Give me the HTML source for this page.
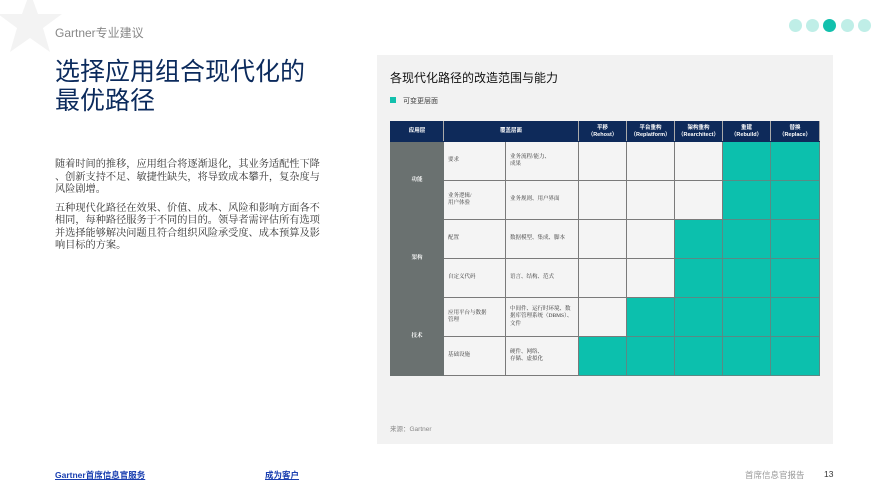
<!DOCTYPE html>
<html><head><meta charset="utf-8"><style>
*{margin:0;padding:0;box-sizing:border-box}
body{width:889px;height:500px;background:#fff;position:relative;overflow:hidden;font-family:"Liberation Sans","Noto Sans CJK SC",sans-serif}
.a{position:absolute}
.dot{position:absolute;top:19px;width:13px;height:13px;border-radius:50%;background:#bfeee7}
table{border-collapse:collapse;position:absolute;left:390px;top:121px;width:429px;table-layout:fixed}
td{border:1px solid #7a7a7a;font-family:"Liberation Serif","Noto Serif CJK SC",serif;font-size:5.5px;color:#333;background:#f4f4f4;padding:0 4px;line-height:1.3}
th{background:#0e2a5a;color:#fff;font-size:5.5px;font-weight:bold;height:20px;border:1px solid #0e2a5a;border-right:1px solid #aaa;line-height:1.25}
td.g{background:#0cc0ad;border-color:#5a8a85}
td.l{background:#6a7170;color:#fff;text-align:center;border-color:#6a7170;font-weight:bold}
tr.r td{height:39px}
</style></head><body>
<svg class="a" style="left:0;top:0" width="70" height="60" viewBox="0 0 70 60"><polygon points="30,-8 38,14 62,14 43,28 50,52 30,38 10,52 17,28 -2,14 22,14" fill="#f3f3f3"/></svg>
<div class="a" style="left:55px;top:24px;font-size:12px;color:#888">Gartner专业建议</div>
<div class="dot" style="left:789px"></div><div class="dot" style="left:806px"></div><div class="dot" style="left:823px;background:#12c0ad"></div><div class="dot" style="left:841px"></div><div class="dot" style="left:858px"></div>
<div class="a" style="left:55px;top:58px;font-size:25px;line-height:29px;color:#0b2a5c">选择应用组合现代化的<br>最优路径</div>
<div class="a" style="left:55px;top:159px;font-family:'Liberation Serif','Noto Serif CJK SC',serif;font-size:10.2px;line-height:12.5px;color:#333;width:300px">随着时间的推移，应用组合将逐渐退化，其业务适配性下降<br>、创新支持不足、敏捷性缺失，将导致成本攀升，复杂度与<br>风险剧增。<div style="height:6px"></div>五种现代化路径在效果、价值、成本、风险和影响方面各不<br>相同，每种路径服务于不同的目的。领导者需评估所有选项<br>并选择能够解决问题且符合组织风险承受度、成本预算及影<br>响目标的方案。</div>
<div class="a" style="left:377px;top:55px;width:456px;height:389px;background:#f2f2f2"></div>
<div class="a" style="left:390px;top:69px;font-size:12px;color:#111">各现代化路径的改造范围与能力</div>
<div class="a" style="left:390px;top:97px;width:6px;height:6px;background:#12c0ad"></div>
<div class="a" style="left:403px;top:96px;font-size:7px;color:#444">可变更层面</div>
<table>
<colgroup><col style="width:53px"><col style="width:62px"><col style="width:73px"><col style="width:48px"><col style="width:48px"><col style="width:48px"><col style="width:48px"><col style="width:49px"></colgroup>
<tr><th>应用层</th><th colspan="2">覆盖层面</th><th>平移<br>（Rehost）</th><th>平台重构<br>（Replatform）</th><th>架构重构<br>（Rearchitect）</th><th>重建<br>（Rebuild）</th><th>替换<br>（Replace）</th></tr>
<tr class="r"><td class="l" rowspan="2">功能</td><td>要求</td><td>业务流程/能力、<br>成果</td><td></td><td></td><td></td><td class="g"></td><td class="g"></td></tr>
<tr class="r"><td>业务逻辑/<br>用户体验</td><td>业务规则、用户界面</td><td></td><td></td><td></td><td class="g"></td><td class="g"></td></tr>
<tr class="r"><td class="l" rowspan="2">架构</td><td>配置</td><td>数据模型、集成、脚本</td><td></td><td></td><td class="g"></td><td class="g"></td><td class="g"></td></tr>
<tr class="r"><td>自定义代码</td><td>语言、结构、范式</td><td></td><td></td><td class="g"></td><td class="g"></td><td class="g"></td></tr>
<tr class="r"><td class="l" rowspan="2">技术</td><td>应用平台与数据<br>管理</td><td>中间件、运行时环境、数据库管理系统（DBMS）、文件</td><td></td><td class="g"></td><td class="g"></td><td class="g"></td><td class="g"></td></tr>
<tr class="r"><td>基础设施</td><td>硬件、网络、<br>存储、虚拟化</td><td class="g"></td><td class="g"></td><td class="g"></td><td class="g"></td><td class="g"></td></tr>
</table>
<div class="a" style="left:390px;top:423px;font-size:6.5px;color:#888">来源：Gartner</div>
<div class="a" style="left:55px;top:469px;font-size:8.5px;color:#1a3fb0;font-weight:bold;text-decoration:underline">Gartner首席信息官服务</div>
<div class="a" style="left:265px;top:469px;font-size:8.5px;color:#1a3fb0;font-weight:bold;text-decoration:underline">成为客户</div>
<div class="a" style="left:745px;top:469px;font-size:8.5px;color:#999">首席信息官报告</div>
<div class="a" style="left:824px;top:469px;font-size:8.5px;color:#333">13</div>
</body></html>
